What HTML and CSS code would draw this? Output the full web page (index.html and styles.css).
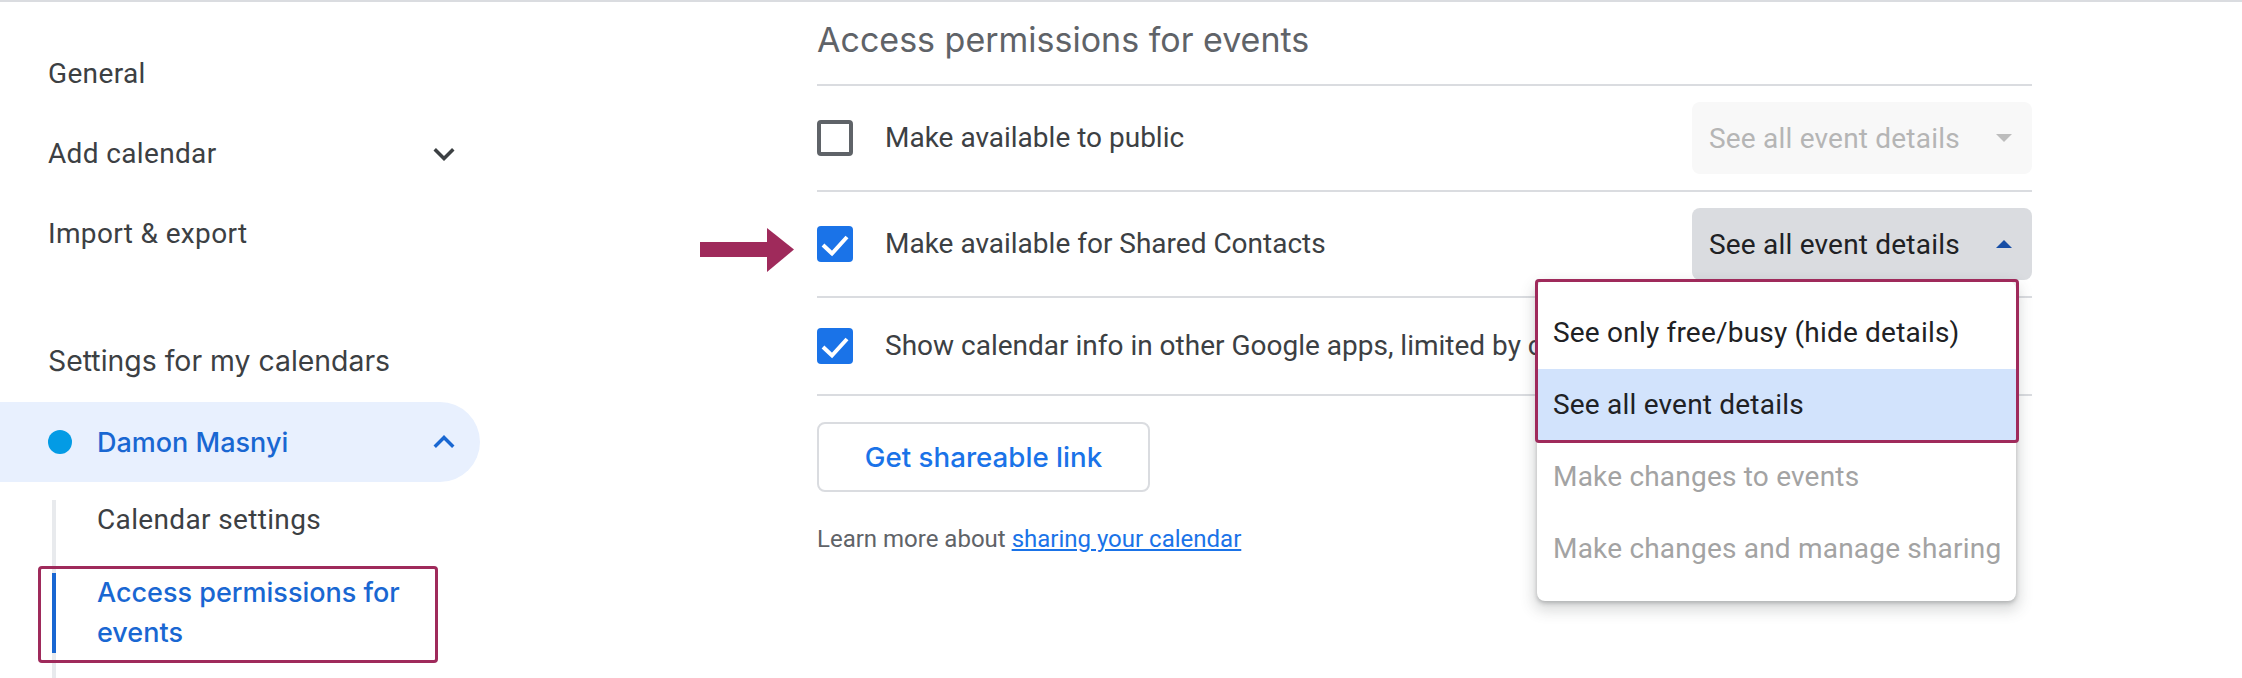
FILE: index.html
```html
<!DOCTYPE html>
<html lang="en">
<head>
<meta charset="utf-8">
<title>Access permissions for events</title>
<link rel="stylesheet" href="styles.css">
</head>
<body>
<div class="topline"></div>
<div class="page">
  <nav class="sidebar">
    <div class="nav-item">General</div>
    <div class="nav-item">Add calendar
      <svg class="chev" viewBox="0 0 24 24"><path d="M16.59 8.59L12 13.170 7.41 8.59 6 10l6 6 6-6z"/></svg>
    </div>
    <div class="nav-item">Import &amp; export</div>
    <div class="section-title">Settings for my calendars</div>
    <div class="cal-pill">
      <span class="dot"></span>
      <span class="cal-name">Damon Masnyi</span>
      <svg class="chev up" viewBox="0 0 24 24"><path d="M12 8l-6 6 1.41 1.41L12 10.83l4.59 4.58L18 14z"/></svg>
    </div>
    <div class="sub-list">
      <div class="sub-item">Calendar settings</div>
      <div class="sub-item active">Access permissions for events</div>
    </div>
  </nav>

  <main class="main">
    <h2 class="heading">Access permissions for events</h2>

    <div class="row">
      <span class="checkbox"></span>
      <span class="label">Make available to public</span>
      <div class="select disabled"><span>See all event details</span><span class="tri down"></span></div>
    </div>

    <div class="row">
      <svg class="pointer" viewBox="0 0 94 44"><rect x="0" y="14" width="68" height="15"/><polygon points="67,0 94,21.5 67,44"/></svg>
      <span class="checkbox checked"><svg viewBox="0 0 36 36"><polyline points="6,19 15,27.5 30,11"/></svg></span>
      <span class="label">Make available for Shared Contacts</span>
      <div class="select-wrap">
        <div class="select open"><span>See all event details</span><span class="tri up"></span></div>
        <div class="menu">
          <div class="menu-item">See only free/busy (hide details)</div>
          <div class="menu-item selected">See all event details</div>
          <div class="menu-item disabled">Make changes to events</div>
          <div class="menu-item disabled">Make changes and manage sharing</div>
          <div class="menu-mark"></div>
        </div>
      </div>
    </div>

    <div class="row plain">
      <span class="checkbox checked"><svg viewBox="0 0 36 36"><polyline points="6,19 15,27.5 30,11"/></svg></span>
      <span class="label clipped">Show calendar info in other Google apps, limited by contacts</span>
    </div>

    <button class="share-btn">Get shareable link</button>
    <p class="learn">Learn more about <a href="#">sharing your calendar</a></p>
  </main>
</div>
</body>
</html>
```

FILE: styles.css
```css
*, *::before, *::after { box-sizing: border-box; }

body {
  margin: 0;
  font-family: Roboto, "Liberation Sans", sans-serif;
  color: #3c4043;
  background: #fff;
  overflow: hidden;
}

.topline {
  height: 2px;
  background: #dadce0;
}

.page {
  display: flex;
  height: 676px;
}

/* ---------- sidebar ---------- */
.sidebar {
  flex: 0 0 480px;
  display: flex;
  flex-direction: column;
  padding-top: 32px;
}

.nav-item {
  height: 80px;
  display: flex;
  align-items: center;
  justify-content: space-between;
  padding: 0 15px 0 48px;
  font-size: 28px;
  line-height: 40px;
  letter-spacing: 0.35px;
  color: #3c4043;
}

.chev {
  width: 42px;
  height: 42px;
  fill: #3c4043;
  flex: none;
}

.chev.up { fill: #1967d2; }

.section-title {
  margin-top: 67px;
  padding-left: 48px;
  font-family: Inter, "Open Sans", sans-serif;
  font-size: 28.4px;
  line-height: 40px;
  color: #3c4043;
}

.cal-pill {
  margin-top: 21px;
  height: 80px;
  border-radius: 0 40px 40px 0;
  background: #e8f0fe;
  display: flex;
  align-items: center;
  padding: 0 15px 0 48px;
}

.dot {
  width: 24px;
  height: 24px;
  border-radius: 50%;
  background: #039be5;
  flex: none;
}

.cal-name {
  flex: 1;
  margin-left: 25px;
  font-family: Inter, "Open Sans", sans-serif;
  font-weight: 500;
  font-size: 27px;
  color: #1967d2;
}

.sub-list {
  flex: 1;
  margin-top: 18px;
  margin-left: 52px;
  padding-right: 40px;
  border-left: 4px solid #e8eaed;
}

.sub-item {
  padding-left: 41px;
  font-size: 28px;
  line-height: 40px;
  letter-spacing: 0.35px;
  color: #3c4043;
}

.sub-item + .sub-item { margin-top: 33px; }

.sub-item.active {
  position: relative;
  margin-left: -4px;
  border-left: 4px solid #1967d2;
  font-family: Inter, "Open Sans", sans-serif;
  font-weight: 500;
  font-size: 27px;
  letter-spacing: 0;
  color: #1967d2;
}

.sub-item.active::after {
  content: "";
  position: absolute;
  left: -18px;
  top: -7px;
  width: 400px;
  height: 97px;
  border: 3px solid #9f2a5b;
  border-radius: 4px;
}

/* ---------- main ---------- */
.main {
  margin-left: 337px;
  width: 1215px;
  flex: none;
}

.heading {
  margin: 0;
  padding: 14px 0 20px;
  font-family: Inter, "Open Sans", sans-serif;
  font-weight: 400;
  font-size: 34px;
  line-height: 48px;
  color: #5f6368;
  border-bottom: 2px solid #dadce0;
}

.row {
  position: relative;
  display: flex;
  align-items: center;
  height: 106px;
  border-bottom: 2px solid #dadce0;
}

.row.plain { height: 98px; }

.checkbox {
  flex: none;
  width: 36px;
  height: 36px;
  border: 4px solid #5f6368;
  border-radius: 4px;
}

.checkbox.checked {
  border: none;
  background: #1a73e8;
}

.checkbox svg {
  display: block;
  width: 36px;
  height: 36px;
  fill: none;
  stroke: #fff;
  stroke-width: 4;
}

.label {
  flex: 1;
  margin-left: 32px;
  font-size: 28px;
  line-height: 40px;
  color: #3c4043;
  white-space: nowrap;
}

.label.clipped {
  flex: 0 0 652px;
  overflow: hidden;
}

.select {
  width: 340px;
  height: 72px;
  border-radius: 8px;
  display: flex;
  align-items: center;
  justify-content: space-between;
  padding: 0 20px 0 17px;
  font-size: 28px;
  letter-spacing: 0.2px;
  flex: none;
}

.select.disabled {
  background: #f8f8f8;
  color: #b5b5b5;
}

.select.open {
  background: #dadce0;
  color: #202124;
}

.tri {
  width: 0;
  height: 0;
  border-left: 8px solid transparent;
  border-right: 8px solid transparent;
}

.tri.down { border-top: 8px solid #bdbdbd; }
.tri.up { border-bottom: 8px solid #174ea6; }

.select-wrap {
  position: relative;
  flex: none;
}

.menu {
  position: absolute;
  top: calc(100% + 1px);
  right: 16px;
  width: 479px;
  padding: 16px 0;
  background: #fff;
  border-radius: 8px;
  box-shadow: 0 6px 14px 4px rgba(60, 64, 67, 0.18), 0 2px 4px rgba(60, 64, 67, 0.3);
  z-index: 5;
}

.menu-item {
  height: 72px;
  line-height: 72px;
  padding-left: 16px;
  font-size: 28px;
  letter-spacing: 0.2px;
  color: #202124;
  white-space: nowrap;
}

.menu-item.selected { background: #d2e3fc; }
.menu-item.disabled { color: #a3a3a3; }

.menu-mark {
  position: absolute;
  top: -2px;
  left: -2px;
  right: -3px;
  height: 164px;
  border: 3px solid #9f2a5b;
  border-radius: 4px;
}

.pointer {
  position: absolute;
  left: -117px;
  top: 36px;
  width: 94px;
  height: 44px;
  fill: #9f2a5b;
}

.share-btn {
  display: block;
  margin-top: 26px;
  width: 333px;
  height: 70px;
  padding: 0;
  border: 2px solid #dadce0;
  border-radius: 8px;
  background: #fff;
  color: #1a73e8;
  font-family: Inter, "Open Sans", sans-serif;
  font-weight: 500;
  font-size: 27.7px;
}

.learn {
  margin: 31px 0 0;
  font-size: 24px;
  line-height: 32px;
  color: #5f6368;
}

.learn a {
  color: #1a73e8;
  text-decoration: underline;
}
```
